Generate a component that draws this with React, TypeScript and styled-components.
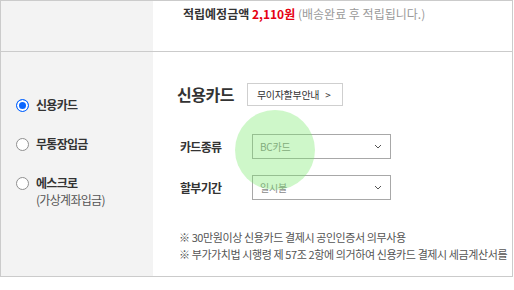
import React from "react";
import styled, { createGlobalStyle } from "styled-components";

const Global = createGlobalStyle`
  html, body { margin: 0; padding: 0; background: #fff; }
  body { font-family: "Noto Sans CJK KR", "Noto Sans", sans-serif; color: #333; }
  * { box-sizing: border-box; }
`;

const Frame = styled.div`
  position: relative;
  width: 513px;
  border: 1px solid #cbcbcb;
`;

const Row = styled.div<{ $h: number; $last?: boolean }>`
  display: grid;
  grid-template-columns: 152px 1fr;
  height: ${(p) => p.$h}px;
  border-bottom: ${(p) => (p.$last ? "none" : "1px solid #cbcbcb")};
`;

const Side = styled.div`
  background: #f3f3f3;
  padding: 44px 0 0 15px;
  display: flex;
  flex-direction: column;
  gap: 21px;
`;

const Main = styled.div<{ $pt: number; $pl: number }>`
  padding: ${(p) => p.$pt}px 0 0 ${(p) => p.$pl}px;
  overflow: hidden;
`;

const Earn = styled.div`
  font-size: 12px;
  line-height: 18px;
  letter-spacing: 0;
  font-weight: 700;
  color: #333;
  white-space: nowrap;
`;
const Red = styled.span`
  color: #e60012;
`;
const Muted = styled.span`
  font-weight: 400;
  color: #9a9a9a;
`;

const Option = styled.div`
  display: flex;
  align-items: flex-start;
`;
const Radio = styled.span<{ $on?: boolean }>`
  flex: none;
  width: 13px;
  height: 13px;
  margin-top: 3px;
  margin-right: 7px;
  border-radius: 50%;
  border: 1px solid ${(p) => (p.$on ? "#0a66ff" : "#8f8f8f")};
  background: ${(p) => (p.$on ? "#0a66ff" : "#fff")};
  box-shadow: ${(p) => (p.$on ? "inset 0 0 0 2px #fff" : "none")};
`;
const OptText = styled.div`
  display: flex;
  flex-direction: column;
`;
const OptLabel = styled.span`
  font-size: 12px;
  line-height: 18px;
  letter-spacing: -0.7px;
  font-weight: 700;
  color: #333;
`;
const OptSub = styled.span`
  font-size: 12px;
  line-height: 15px;
  letter-spacing: -0.7px;
  color: #555;
`;

const Heading = styled.div`
  display: flex;
  align-items: center;
  gap: 13px;
  height: 23px;
`;
const Title = styled.h2`
  margin: 0;
  font-size: 16px;
  line-height: 23px;
  letter-spacing: -0.5px;
  font-weight: 700;
  color: #333;
`;
const GuideButton = styled.button`
  flex: none;
  height: 23px;
  width: 96px;
  padding: 0 0 0 9px;
  border: 1px solid #cfcfcf;
  background: #fff;
  font-family: inherit;
  font-size: 10px;
  letter-spacing: -0.3px;
  color: #333;
  text-align: left;
  display: flex;
  align-items: center;
  gap: 6px;
`;

const Form = styled.div`
  margin-top: 28px;
  padding-left: 3px;
  display: flex;
  flex-direction: column;
  gap: 16px;
`;
const Field = styled.div`
  display: flex;
  align-items: center;
`;
const Label = styled.span`
  flex: none;
  width: 72px;
  font-size: 12px;
  letter-spacing: -0.7px;
  font-weight: 700;
  color: #333;
`;
const Select = styled.div`
  flex: none;
  width: 139px;
  height: 25px;
  border: 1px solid #a8a8a8;
  background: #fff;
  display: flex;
  align-items: center;
  justify-content: space-between;
  padding: 0 8px 0 7px;
  font-size: 10px;
  letter-spacing: -0.2px;
  color: #8a8a8a;
`;

const Notes = styled.div`
  margin-top: 29px;
  padding-left: 2px;
  font-size: 11px;
  line-height: 17px;
  letter-spacing: -0.4px;
  color: #555;
  white-space: nowrap;
`;

const Touch = styled.span`
  position: absolute;
  left: 234px;
  top: 109px;
  width: 80px;
  height: 80px;
  border-radius: 50%;
  background: rgba(120, 232, 105, 0.36);
  pointer-events: none;
`;

const Chevron = () => (
  <svg width="8" height="5" viewBox="0 0 8 5">
    <path d="M1 1l3 3 3-3" fill="none" stroke="#555" strokeWidth="1" />
  </svg>
);

export default function App() {
  return (
    <>
      <Global />
      <Frame>
        <Row $h={51}>
          <Side />
          <Main $pt={4} $pl={30}>
            <Earn>
              적립예정금액 <Red>2,110원</Red> <Muted>(배송완료 후 적립됩니다.)</Muted>
            </Earn>
          </Main>
        </Row>
        <Row $h={224} $last>
          <Side>
            <Option>
              <Radio $on />
              <OptText>
                <OptLabel>신용카드</OptLabel>
              </OptText>
            </Option>
            <Option>
              <Radio />
              <OptText>
                <OptLabel>무통장입금</OptLabel>
              </OptText>
            </Option>
            <Option>
              <Radio />
              <OptText>
                <OptLabel>에스크로</OptLabel>
                <OptSub>(가상계좌입금)</OptSub>
              </OptText>
            </Option>
          </Side>
          <Main $pt={31} $pl={24}>
            <Heading>
              <Title>신용카드</Title>
              <GuideButton>
                무이자할부안내 <span>&gt;</span>
              </GuideButton>
            </Heading>
            <Form>
              <Field>
                <Label>카드종류</Label>
                <Select>
                  BC카드
                  <Chevron />
                </Select>
              </Field>
              <Field>
                <Label>할부기간</Label>
                <Select>
                  일시불
                  <Chevron />
                </Select>
              </Field>
            </Form>
            <Notes>
              ※ 30만원이상 신용카드 결제시 공인인증서 의무사용
              <br />※ 부가가치법 시행령 제 57조 2항에 의거하여 신용카드 결제시 세금계산서를
            </Notes>
          </Main>
        </Row>
        <Touch />
      </Frame>
    </>
  );
}
